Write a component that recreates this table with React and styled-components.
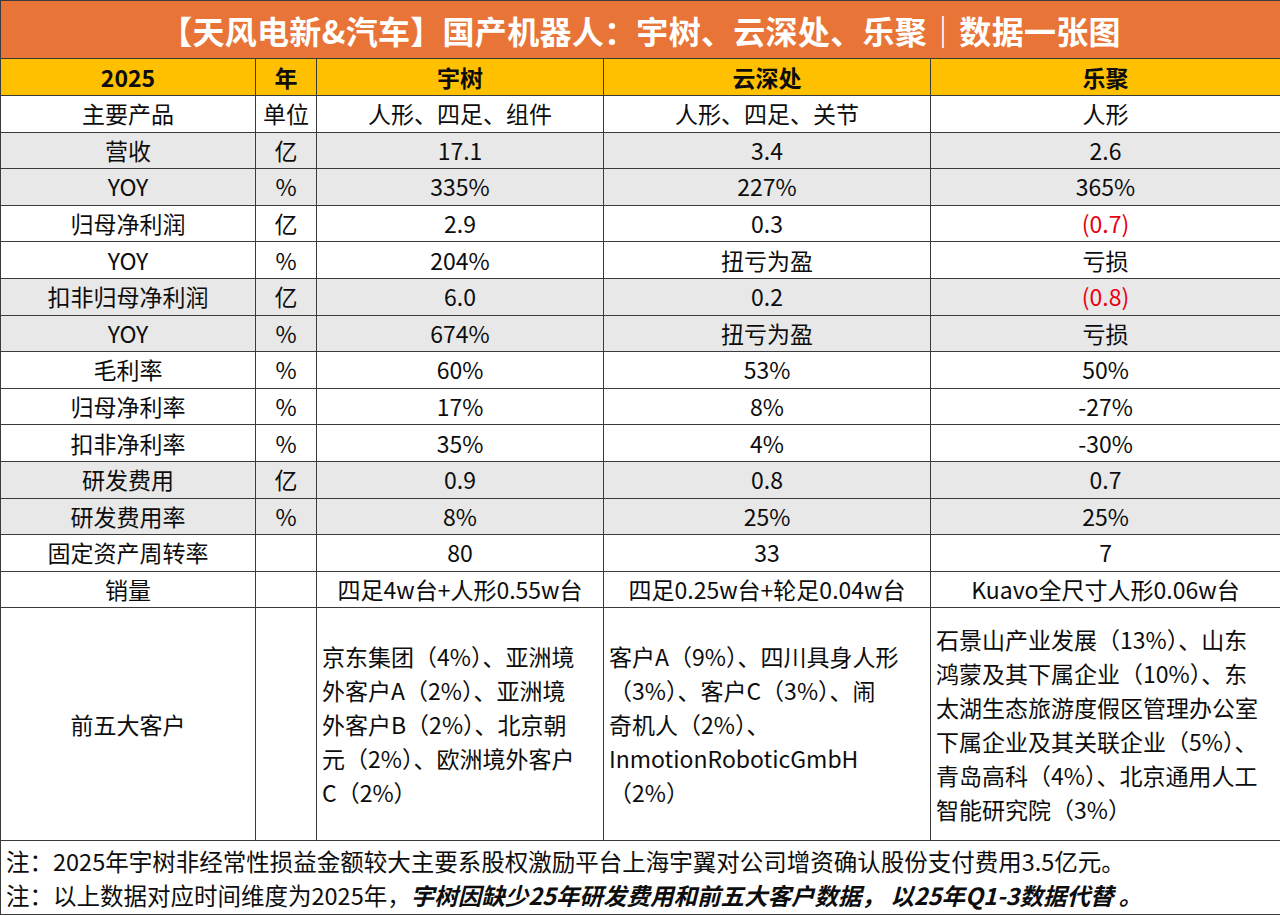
import React from 'react';
import styled, { createGlobalStyle } from 'styled-components';

const GlobalStyle = createGlobalStyle`
  html, body {
    margin: 0;
    padding: 0;
    background: #ffffff;
  }
  body {
    font-family: "Noto Sans CJK SC", "Noto Sans", "Liberation Sans", sans-serif;
    color: #111;
  }
`;

const Sheet = styled.div`
  width: 1280px;
  height: 916px;
  overflow: hidden;
  background: #ffffff;
`;

const Table = styled.table`
  width: 1280px;
  border-collapse: collapse;
  table-layout: fixed;
`;

const TitleCell = styled.td`
  height: 57px;
  padding: 0;
  background: #e87537;
  color: #ffffff;
  font-size: 32px;
  font-weight: 700;
  text-align: center;
  border: 1px solid #3a3a3a;
  letter-spacing: 0.3px;
`;

const Row = styled.tr`
  height: ${(p) => p.$h || 36.6}px;
  background: ${(p) => (p.$head ? '#ffc000' : p.$shade ? '#e8e8e8' : '#ffffff')};
`;

const Cell = styled.td`
  padding: 0 6px;
  border: 1px solid #3a3a3a;
  font-size: 23px;
  line-height: 1;
  font-weight: ${(p) => (p.$bold ? 700 : 400)};
  color: ${(p) => (p.$red ? '#e60012' : '#0d0d0d')};
  text-align: center;
  vertical-align: middle;
  white-space: nowrap;
`;

const ListCell = styled(Cell)`
  text-align: left;
  line-height: 34px;
  padding: 0 5px;
`;

const Line = styled.div`
  white-space: nowrap;
`;

const NoteCell = styled.td`
  height: 73px;
  padding: 0 5px;
  border: 1px solid #3a3a3a;
  font-size: 23.5px;
  line-height: 34px;
  color: #0d0d0d;
  vertical-align: middle;
  white-space: nowrap;
`;

const Strong = styled.span`
  font-weight: 700;
  font-style: italic;
`;

const rows = [
  { label: '主要产品', unit: '单位', v: ['人形、四足、组件', '人形、四足、关节', '人形'] },
  { label: '营收', unit: '亿', v: ['17.1', '3.4', '2.6'], shade: true },
  { label: 'YOY', unit: '%', v: ['335%', '227%', '365%'], shade: true },
  { label: '归母净利润', unit: '亿', v: ['2.9', '0.3', '(0.7)'], red: 2 },
  { label: 'YOY', unit: '%', v: ['204%', '扭亏为盈', '亏损'] },
  { label: '扣非归母净利润', unit: '亿', v: ['6.0', '0.2', '(0.8)'], shade: true, red: 2 },
  { label: 'YOY', unit: '%', v: ['674%', '扭亏为盈', '亏损'], shade: true },
  { label: '毛利率', unit: '%', v: ['60%', '53%', '50%'] },
  { label: '归母净利率', unit: '%', v: ['17%', '8%', '-27%'] },
  { label: '扣非净利率', unit: '%', v: ['35%', '4%', '-30%'] },
  { label: '研发费用', unit: '亿', v: ['0.9', '0.8', '0.7'], shade: true },
  { label: '研发费用率', unit: '%', v: ['8%', '25%', '25%'], shade: true },
  { label: '固定资产周转率', unit: '', v: ['80', '33', '7'] },
  { label: '销量', unit: '', v: ['四足4w台+人形0.55w台', '四足0.25w台+轮足0.04w台', 'Kuavo全尺寸人形0.06w台'] },
];

const customers = [
  [
    '京东集团（4%）、亚洲境',
    '外客户A（2%）、亚洲境',
    '外客户B（2%）、北京朝',
    '元（2%）、欧洲境外客户',
    'C（2%）',
  ],
  [
    '客户A（9%）、四川具身人形',
    '（3%）、客户C（3%）、闹',
    '奇机人（2%）、',
    'InmotionRoboticGmbH',
    '（2%）',
  ],
  [
    '石景山产业发展（13%）、山东',
    '鸿蒙及其下属企业（10%）、东',
    '太湖生态旅游度假区管理办公室',
    '下属企业及其关联企业（5%）、',
    '青岛高科（4%）、北京通用人工',
    '智能研究院（3%）',
  ],
];

const App = () => {
  return (
    <Sheet>
      <GlobalStyle />
      <Table>
        <colgroup>
          <col style={{ width: 255 }} />
          <col style={{ width: 61 }} />
          <col style={{ width: 287 }} />
          <col style={{ width: 327 }} />
          <col style={{ width: 350 }} />
        </colgroup>
        <tbody>
          <tr>
            <TitleCell colSpan={5}>【天风电新&amp;汽车】国产机器人：宇树、云深处、乐聚｜数据一张图</TitleCell>
          </tr>
          <Row $head $h={37}>
            <Cell $bold>2025</Cell>
            <Cell $bold>年</Cell>
            <Cell $bold>宇树</Cell>
            <Cell $bold>云深处</Cell>
            <Cell $bold>乐聚</Cell>
          </Row>
          {rows.map((r, i) => (
            <Row key={i} $shade={r.shade}>
              <Cell>{r.label}</Cell>
              <Cell>{r.unit}</Cell>
              {r.v.map((val, j) => (
                <Cell key={j} $red={r.red === j}>{val}</Cell>
              ))}
            </Row>
          ))}
          <Row $h={233}>
            <Cell>前五大客户</Cell>
            <Cell />
            {customers.map((list, j) => (
              <ListCell key={j}>
                {list.map((line, k) => (
                  <Line key={k}>{line}</Line>
                ))}
              </ListCell>
            ))}
          </Row>
          <tr>
            <NoteCell colSpan={5}>
              <Line>注：2025年宇树非经常性损益金额较大主要系股权激励平台上海宇翼对公司增资确认股份支付费用3.5亿元。</Line>
              <Line>
                注：以上数据对应时间维度为2025年，
                <Strong>宇树因缺少25年研发费用和前五大客户数据， 以25年Q1-3数据代替 。</Strong>
              </Line>
            </NoteCell>
          </tr>
        </tbody>
      </Table>
    </Sheet>
  );
};

export default App;
